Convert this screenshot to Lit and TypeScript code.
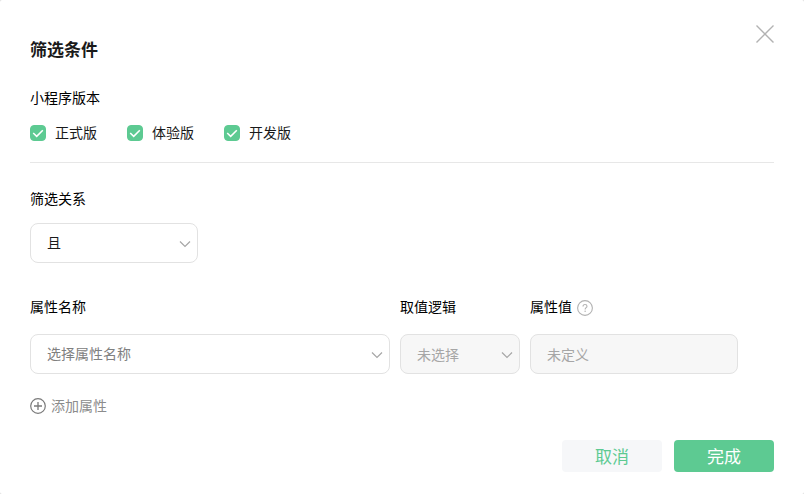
import { LitElement, html, css } from "lit";
import { customElement, state } from "lit/decorators.js";

const chevron = html`<svg class="chevron" viewBox="0 0 12 8" aria-hidden="true">
  <path d="M1 1.5 L6 6.5 L11 1.5" fill="none" stroke="currentColor" stroke-width="1.2" />
</svg>`;

@customElement("app-root")
export class AppRoot extends LitElement {
  @state() private versions = [
    { id: "release", name: "正式版", checked: true },
    { id: "trial", name: "体验版", checked: true },
    { id: "develop", name: "开发版", checked: true },
  ];

  static styles = css`
    :host {
      display: block;
      min-height: 100vh;
      background: #d9d9d9;
      font-family: "Noto Sans CJK SC", sans-serif;
      font-size: 14px;
      line-height: 20px;
      color: #000;
    }
    *,
    *::before {
      box-sizing: border-box;
    }
    button,
    input,
    select {
      font: inherit;
      margin: 0;
    }
    svg {
      display: block;
    }
    .dialog {
      min-height: 100vh;
      padding: 25px 30px 22px;
      background: #fff;
      border-radius: 2px;
    }
    .head {
      display: flex;
      justify-content: space-between;
      align-items: flex-start;
    }
    .title {
      margin: 12px 0 0;
      font-size: 17px;
      line-height: 24px;
      font-weight: 600;
      color: #1a1a1a;
    }
    .close {
      padding: 0;
      border: 0;
      background: none;
      color: #b2b2b2;
      cursor: pointer;
    }
    .close svg {
      width: 18px;
      height: 18px;
    }
    .versions {
      margin: 26px 0 0;
      padding: 0 0 20px;
      border: 0;
      border-bottom: 1px solid #e7e7e7;
    }
    .versions legend {
      padding: 0;
    }
    .checks {
      display: flex;
      gap: 30px;
      padding-top: 15px;
    }
    .check {
      display: flex;
      align-items: center;
      gap: 9px;
      color: #1a1a1a;
    }
    .box {
      display: grid;
      width: 16px;
      height: 16px;
      margin-top: 2px;
    }
    .box > * {
      grid-area: 1 / 1;
    }
    .box input {
      appearance: none;
      width: 16px;
      height: 16px;
      border: 1px solid #d9d9d9;
      border-radius: 4px;
      background: #fff;
    }
    .box input:checked {
      border-color: #5dca92;
      background: #5dca92;
    }
    .box svg {
      z-index: 1;
      width: 16px;
      height: 16px;
      pointer-events: none;
    }
    .relation {
      display: flex;
      flex-direction: column;
      gap: 15px;
      margin-top: 25px;
    }
    .relation .pick {
      width: 168px;
    }
    .fields {
      display: grid;
      grid-template-columns: 45fr 15fr 26fr;
      gap: 10px;
      margin-top: 33px;
      padding-right: 36px;
    }
    .field {
      display: flex;
      flex-direction: column;
      gap: 18px;
      min-width: 0;
    }
    .caption {
      display: flex;
      align-items: center;
      gap: 5px;
    }
    .help {
      width: 16px;
      height: 16px;
      margin-top: 4px;
      color: #b2b2b2;
    }
    .pick {
      display: grid;
      align-items: center;
    }
    .pick > * {
      grid-area: 1 / 1;
    }
    .control {
      appearance: none;
      width: 100%;
      height: 40px;
      padding: 0 16px 2px;
      border: 1px solid #e2e2e2;
      border-radius: 8px;
      background: #fff;
      color: #1a1a1a;
      outline: none;
    }
    .control.empty {
      color: #808080;
    }
    .control:disabled {
      padding-bottom: 0;
      background: #f7f7f7;
      color: #a6a6a6;
      opacity: 1;
    }
    .control::placeholder {
      color: #a6a6a6;
      opacity: 1;
    }
    .chevron {
      z-index: 1;
      justify-self: end;
      width: 12px;
      height: 8px;
      margin-top: 2px;
      margin-right: 7px;
      color: #a6a6a6;
      pointer-events: none;
    }
    .add {
      display: flex;
      align-items: center;
      gap: 5px;
      margin-top: 21px;
      padding: 0;
      border: 0;
      background: none;
      color: #8c8c8c;
      cursor: pointer;
    }
    .add svg {
      width: 16px;
      height: 16px;
      margin-top: 2px;
      color: #7a7a7a;
    }
    .actions {
      display: flex;
      justify-content: flex-end;
      gap: 12px;
      margin-top: 25px;
    }
    .action {
      width: 100px;
      height: 32px;
      padding: 0;
      border: 0;
      border-radius: 4px;
      background: #f6f7f9;
      color: #5dca92;
      font-size: 17px;
      line-height: 24px;
      cursor: pointer;
    }
    .action.primary {
      background: #5dca92;
      color: #fff;
    }
  `;

  private toggle(id: string) {
    this.versions = this.versions.map((v) => (v.id === id ? { ...v, checked: !v.checked } : v));
  }

  render() {
    return html`
      <div class="dialog" role="dialog" aria-labelledby="title">
        <header class="head">
          <h1 class="title" id="title">筛选条件</h1>
          <button class="close" type="button" aria-label="关闭">
            <svg viewBox="0 0 18 18" aria-hidden="true">
              <path d="M0.5 0.5 L17.5 17.5 M17.5 0.5 L0.5 17.5" stroke="currentColor" stroke-width="1.4" />
            </svg>
          </button>
        </header>

        <fieldset class="versions">
          <legend>小程序版本</legend>
          <div class="checks">
            ${this.versions.map(
              (v) => html`<label class="check">
                <span class="box">
                  <input type="checkbox" .checked=${v.checked} @change=${() => this.toggle(v.id)} />
                  <svg viewBox="0 0 16 16" aria-hidden="true">
                    <path d="M3.2 8 L6.7 11.4 L12.8 5.2" fill="none" stroke="#fff" stroke-width="1.5" />
                  </svg>
                </span>
                <span>${v.name}</span>
              </label>`,
            )}
          </div>
        </fieldset>

        <div class="relation">
          <label for="relation">筛选关系</label>
          <div class="pick">
            <select class="control" id="relation">
              <option>且</option>
              <option>或</option>
            </select>
            ${chevron}
          </div>
        </div>

        <div class="fields">
          <div class="field">
            <label class="caption" for="name">属性名称</label>
            <div class="pick">
              <select class="control empty" id="name">
                <option>选择属性名称</option>
              </select>
              ${chevron}
            </div>
          </div>
          <div class="field">
            <label class="caption" for="logic">取值逻辑</label>
            <div class="pick">
              <select class="control" id="logic" disabled>
                <option>未选择</option>
              </select>
              ${chevron}
            </div>
          </div>
          <div class="field">
            <label class="caption" for="value">
              属性值
              <svg class="help" viewBox="0 0 16 16" aria-hidden="true">
                <circle cx="8" cy="8" r="7.4" fill="none" stroke="currentColor" stroke-width="1.1" />
                <path
                  d="M6 6.5 C6 5.2 6.8 4.5 8 4.5 C9.2 4.5 10 5.2 10 6.2 C10 7.6 8.1 7.6 8.1 9.4"
                  fill="none"
                  stroke="currentColor"
                  stroke-width="1.1"
                />
                <circle cx="8.1" cy="11.2" r="0.75" fill="currentColor" />
              </svg>
            </label>
            <input class="control" id="value" type="text" placeholder="未定义" disabled />
          </div>
        </div>

        <button class="add" type="button">
          <svg viewBox="0 0 16 16" aria-hidden="true">
            <circle cx="8" cy="8" r="7.3" fill="none" stroke="currentColor" stroke-width="1.2" />
            <path d="M8 4 V12 M4 8 H12" stroke="currentColor" stroke-width="1.3" />
          </svg>
          <span>添加属性</span>
        </button>

        <footer class="actions">
          <button class="action" type="button">取消</button>
          <button class="action primary" type="button">完成</button>
        </footer>
      </div>
    `;
  }
}
